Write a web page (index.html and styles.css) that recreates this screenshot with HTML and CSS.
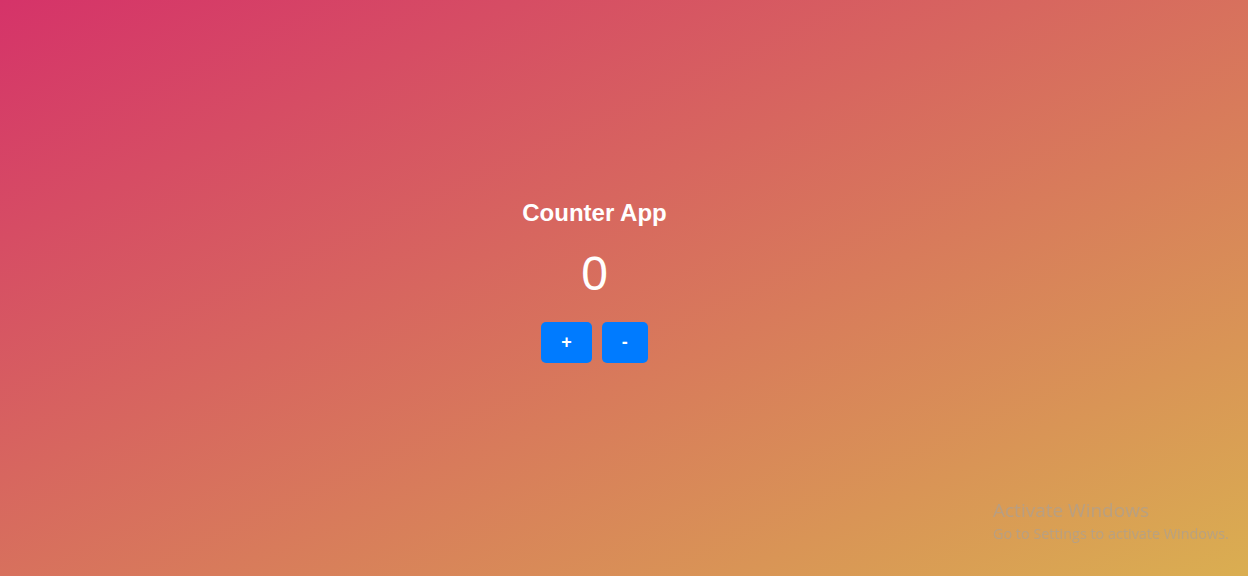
FILE: index.html
```html
<!DOCTYPE html>
<html lang="en">
<head>
<meta charset="utf-8">
<title>Counter App</title>
<link rel="stylesheet" href="styles.css">
</head>
<body>
  <main class="page">
    <div class="counter">
      <h1 class="counter-title">Counter App</h1>
      <div class="counter-value">0</div>
      <div class="counter-buttons">
        <button class="btn">+</button>
        <button class="btn">-</button>
      </div>
    </div>
  </main>
  <div class="watermark">
    <div class="watermark-title">Activate Windows</div>
    <div class="watermark-sub">Go to Settings to activate Windows.</div>
  </div>
</body>
</html>
```
FILE: styles.css
```css
html, body {
  margin: 0;
  height: 100%;
}
body {
  background: linear-gradient(to bottom right, #d53369, #daae51);
  font-family: "Liberation Sans", Arial, sans-serif;
  color: #fff;
  overflow: hidden;
}
.page {
  height: 100%;
  box-sizing: border-box;
  display: flex;
  align-items: center;
  justify-content: center;
  padding: 0 59px 15px 0;
}
.counter {
  display: flex;
  flex-direction: column;
  align-items: center;
}
.counter-title {
  margin: 0 0 19px;
  padding-top: 1px;
  font-size: 24px;
  font-weight: bold;
}
.counter-value {
  font-size: 48px;
  margin-bottom: 21px;
}
.counter-buttons {
  display: flex;
  gap: 10px;
}
.btn {
  font-family: "Liberation Sans", Arial, sans-serif;
  font-size: 18px;
  font-weight: bold;
  color: #fff;
  background: #007bff;
  border: none;
  border-radius: 5px;
  padding: 10px 20px;
  line-height: normal;
  cursor: pointer;
}
.watermark {
  position: fixed;
  left: 993px;
  top: 498px;
  color: rgba(170, 160, 150, 0.7);
  font-family: "Open Sans", "Noto Sans", sans-serif;
}
.watermark-title {
  font-size: 19px;
  line-height: 25px;
}
.watermark-sub {
  font-size: 14.4px;
  line-height: 22px;
}
```
